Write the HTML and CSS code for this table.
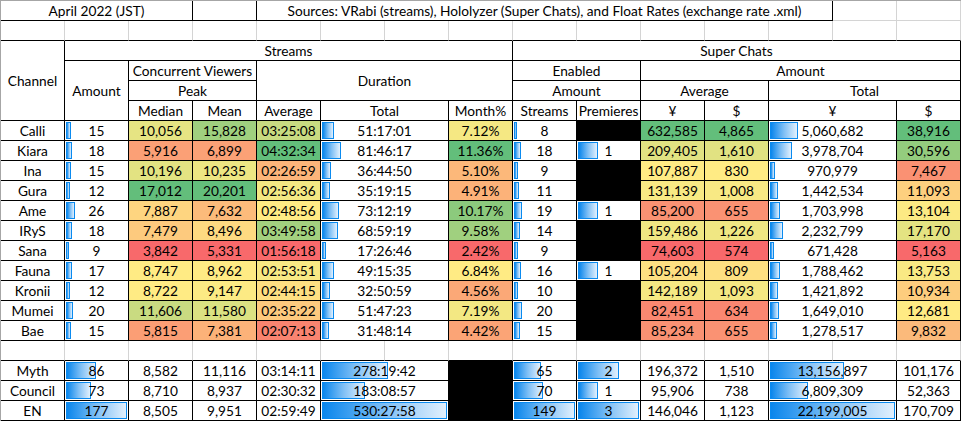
FILE: index.html
```html
<!DOCTYPE html>
<html>
<head>
<meta charset="utf-8">
<link rel="stylesheet" href="styles.css">
</head>
<body>
<div class="sheet">
  <!-- row 1 -->
  <div class="c s3">April 2022 (JST)</div>
  <div class="c"></div>
  <div class="c s9">Sources: VRabi (streams), Hololyzer (Super Chats), and Float Rates (exchange rate .xml)</div>
  <div class="c g"></div>
  <div class="c g"></div>
  <!-- row 2 -->
  <div class="c gb"></div><div class="c gb"></div><div class="c gb"></div><div class="c gb"></div><div class="c gb"></div>
  <div class="c gb"></div><div class="c gb"></div><div class="c gb"></div><div class="c gb"></div><div class="c gb"></div>
  <div class="c gb"></div><div class="c gb"></div><div class="c gb"></div><div class="c gb"></div><div class="c gb"></div>
  <!-- row 3 -->
  <div class="c r4">Channel</div>
  <div class="c s7">Streams</div>
  <div class="c s7">Super Chats</div>
  <!-- row 4 -->
  <div class="c r3">Amount</div>
  <div class="c s2">Concurrent Viewers</div>
  <div class="c s4 r2">Duration</div>
  <div class="c s2">Enabled</div>
  <div class="c s5">Amount</div>
  <!-- row 5 -->
  <div class="c s2">Peak</div>
  <div class="c s2">Amount</div>
  <div class="c s2">Average</div>
  <div class="c s3">Total</div>
  <!-- row 6 -->
  <div class="c">Median</div>
  <div class="c">Mean</div>
  <div class="c">Average</div>
  <div class="c s2">Total</div>
  <div class="c">Month%</div>
  <div class="c">Streams</div>
  <div class="c">Premieres</div>
  <div class="c">¥</div>
  <div class="c">$</div>
  <div class="c s2">¥</div>
  <div class="c">$</div>

  <!-- Calli -->
  <div class="c">Calli</div>
  <div class="c"><span class="bar" style="width:5px"></span><span class="v">15</span></div>
  <div class="c" style="background:rgb(230,228,131)">10,056</div>
  <div class="c" style="background:rgb(160,208,127)">15,828</div>
  <div class="c" style="background:rgb(200,219,129)">03:25:08</div>
  <div class="c s2"><span class="bar" style="width:12px"></span><span class="v">51:17:01</span></div>
  <div class="c" style="background:rgb(245,232,131)">7.12%</div>
  <div class="c"><span class="bar" style="width:3px"></span><span class="v">8</span></div>
  <div class="c k"></div>
  <div class="c" style="background:rgb(99,190,123)">632,585</div>
  <div class="c" style="background:rgb(99,190,123)">4,865</div>
  <div class="c s2"><span class="bar" style="width:28px"></span><span class="v">5,060,682</span></div>
  <div class="c" style="background:rgb(99,190,123)">38,916</div>

  <!-- Kiara -->
  <div class="c">Kiara</div>
  <div class="c"><span class="bar" style="width:6px"></span><span class="v">18</span></div>
  <div class="c" style="background:rgb(251,160,118)">5,916</div>
  <div class="c" style="background:rgb(251,161,118)">6,899</div>
  <div class="c" style="background:rgb(99,190,123)">04:32:34</div>
  <div class="c s2"><span class="bar" style="width:19px"></span><span class="v">81:46:17</span></div>
  <div class="c" style="background:rgb(99,190,123)">11.36%</div>
  <div class="c"><span class="bar" style="width:7px"></span><span class="v">18</span></div>
  <div class="c"><span class="bar" style="width:20px"></span><span class="v">1</span></div>
  <div class="c" style="background:rgb(225,226,130)">209,405</div>
  <div class="c" style="background:rgb(225,226,130)">1,610</div>
  <div class="c s2"><span class="bar" style="width:22px"></span><span class="v">3,978,704</span></div>
  <div class="c" style="background:rgb(148,204,126)">30,596</div>

  <!-- Ina -->
  <div class="c">Ina</div>
  <div class="c"><span class="bar" style="width:5px"></span><span class="v">15</span></div>
  <div class="c" style="background:rgb(227,227,130)">10,196</div>
  <div class="c" style="background:rgb(237,230,131)">10,235</div>
  <div class="c" style="background:rgb(252,181,122)">02:26:59</div>
  <div class="c s2"><span class="bar" style="width:9px"></span><span class="v">36:44:50</span></div>
  <div class="c" style="background:rgb(252,184,122)">5.10%</div>
  <div class="c"><span class="bar" style="width:4px"></span><span class="v">9</span></div>
  <div class="c k"></div>
  <div class="c" style="background:rgb(255,235,132)">107,887</div>
  <div class="c" style="background:rgb(255,235,132)">830</div>
  <div class="c s2"><span class="bar" style="width:5px"></span><span class="v">970,979</span></div>
  <div class="c" style="background:rgb(250,145,115)">7,467</div>

  <!-- Gura -->
  <div class="c">Gura</div>
  <div class="c"><span class="bar" style="width:4px"></span><span class="v">12</span></div>
  <div class="c" style="background:rgb(99,190,123)">17,012</div>
  <div class="c" style="background:rgb(99,190,123)">20,201</div>
  <div class="c" style="background:rgb(243,232,131)">02:56:36</div>
  <div class="c s2"><span class="bar" style="width:8px"></span><span class="v">35:19:15</span></div>
  <div class="c" style="background:rgb(252,178,121)">4.91%</div>
  <div class="c"><span class="bar" style="width:5px"></span><span class="v">11</span></div>
  <div class="c k"></div>
  <div class="c" style="background:rgb(248,233,132)">131,139</div>
  <div class="c" style="background:rgb(248,233,132)">1,008</div>
  <div class="c s2"><span class="bar" style="width:8px"></span><span class="v">1,442,534</span></div>
  <div class="c" style="background:rgb(253,208,127)">11,093</div>

  <!-- Ame -->
  <div class="c">Ame</div>
  <div class="c"><span class="bar" style="width:9px"></span><span class="v">26</span></div>
  <div class="c" style="background:rgb(254,213,128)">7,887</div>
  <div class="c" style="background:rgb(252,187,123)">7,632</div>
  <div class="c" style="background:rgb(255,235,132)">02:48:56</div>
  <div class="c s2"><span class="bar" style="width:17px"></span><span class="v">73:12:19</span></div>
  <div class="c" style="background:rgb(140,202,125)">10.17%</div>
  <div class="c"><span class="bar" style="width:8px"></span><span class="v">19</span></div>
  <div class="c"><span class="bar" style="width:20px"></span><span class="v">1</span></div>
  <div class="c" style="background:rgb(250,146,115)">85,200</div>
  <div class="c" style="background:rgb(250,146,115)">655</div>
  <div class="c s2"><span class="bar" style="width:10px"></span><span class="v">1,703,998</span></div>
  <div class="c" style="background:rgb(252,234,132)">13,104</div>

  <!-- IRyS -->
  <div class="c">IRyS</div>
  <div class="c"><span class="bar" style="width:6px"></span><span class="v">18</span></div>
  <div class="c" style="background:rgb(253,202,126)">7,479</div>
  <div class="c" style="background:rgb(254,218,129)">8,496</div>
  <div class="c" style="background:rgb(163,209,127)">03:49:58</div>
  <div class="c s2"><span class="bar" style="width:16px"></span><span class="v">68:59:19</span></div>
  <div class="c" style="background:rgb(160,208,127)">9.58%</div>
  <div class="c"><span class="bar" style="width:6px"></span><span class="v">14</span></div>
  <div class="c k"></div>
  <div class="c" style="background:rgb(240,231,131)">159,486</div>
  <div class="c" style="background:rgb(240,231,131)">1,226</div>
  <div class="c s2"><span class="bar" style="width:13px"></span><span class="v">2,232,799</span></div>
  <div class="c" style="background:rgb(228,227,130)">17,170</div>

  <!-- Sana -->
  <div class="c">Sana</div>
  <div class="c"><span class="bar" style="width:3px"></span><span class="v">9</span></div>
  <div class="c" style="background:rgb(248,105,107)">3,842</div>
  <div class="c" style="background:rgb(248,105,107)">5,331</div>
  <div class="c" style="background:rgb(248,105,107)">01:56:18</div>
  <div class="c s2"><span class="bar" style="width:4px"></span><span class="v">17:26:46</span></div>
  <div class="c" style="background:rgb(248,105,107)">2.42%</div>
  <div class="c"><span class="bar" style="width:4px"></span><span class="v">9</span></div>
  <div class="c k"></div>
  <div class="c" style="background:rgb(248,105,107)">74,603</div>
  <div class="c" style="background:rgb(248,105,107)">574</div>
  <div class="c s2"><span class="bar" style="width:4px"></span><span class="v">671,428</span></div>
  <div class="c" style="background:rgb(248,105,107)">5,163</div>

  <!-- Fauna -->
  <div class="c">Fauna</div>
  <div class="c"><span class="bar" style="width:6px"></span><span class="v">17</span></div>
  <div class="c" style="background:rgb(255,235,132)">8,747</div>
  <div class="c" style="background:rgb(255,235,132)">8,962</div>
  <div class="c" style="background:rgb(248,233,132)">02:53:51</div>
  <div class="c s2"><span class="bar" style="width:12px"></span><span class="v">49:15:35</span></div>
  <div class="c" style="background:rgb(255,235,132)">6.84%</div>
  <div class="c"><span class="bar" style="width:7px"></span><span class="v">16</span></div>
  <div class="c"><span class="bar" style="width:20px"></span><span class="v">1</span></div>
  <div class="c" style="background:rgb(254,224,130)">105,204</div>
  <div class="c" style="background:rgb(254,224,130)">809</div>
  <div class="c s2"><span class="bar" style="width:10px"></span><span class="v">1,788,462</span></div>
  <div class="c" style="background:rgb(249,233,132)">13,753</div>

  <!-- Kronii -->
  <div class="c">Kronii</div>
  <div class="c"><span class="bar" style="width:4px"></span><span class="v">12</span></div>
  <div class="c" style="background:rgb(255,235,132)">8,722</div>
  <div class="c" style="background:rgb(252,234,132)">9,147</div>
  <div class="c" style="background:rgb(254,223,130)">02:44:15</div>
  <div class="c s2"><span class="bar" style="width:8px"></span><span class="v">32:50:59</span></div>
  <div class="c" style="background:rgb(251,168,119)">4.56%</div>
  <div class="c"><span class="bar" style="width:4px"></span><span class="v">10</span></div>
  <div class="c k"></div>
  <div class="c" style="background:rgb(245,232,131)">142,189</div>
  <div class="c" style="background:rgb(245,232,131)">1,093</div>
  <div class="c s2"><span class="bar" style="width:8px"></span><span class="v">1,421,892</span></div>
  <div class="c" style="background:rgb(253,205,126)">10,934</div>

  <!-- Mumei -->
  <div class="c">Mumei</div>
  <div class="c"><span class="bar" style="width:7px"></span><span class="v">20</span></div>
  <div class="c" style="background:rgb(201,219,129)">11,606</div>
  <div class="c" style="background:rgb(219,225,130)">11,580</div>
  <div class="c" style="background:rgb(253,201,126)">02:35:22</div>
  <div class="c s2"><span class="bar" style="width:12px"></span><span class="v">51:47:23</span></div>
  <div class="c" style="background:rgb(243,232,131)">7.19%</div>
  <div class="c"><span class="bar" style="width:8px"></span><span class="v">20</span></div>
  <div class="c k"></div>
  <div class="c" style="background:rgb(250,136,113)">82,451</div>
  <div class="c" style="background:rgb(250,135,113)">634</div>
  <div class="c s2"><span class="bar" style="width:9px"></span><span class="v">1,649,010</span></div>
  <div class="c" style="background:rgb(255,235,132)">12,681</div>

  <!-- Bae -->
  <div class="c">Bae</div>
  <div class="c"><span class="bar" style="width:5px"></span><span class="v">15</span></div>
  <div class="c" style="background:rgb(251,158,117)">5,815</div>
  <div class="c" style="background:rgb(252,178,121)">7,381</div>
  <div class="c" style="background:rgb(249,132,112)">02:07:13</div>
  <div class="c s2"><span class="bar" style="width:7px"></span><span class="v">31:48:14</span></div>
  <div class="c" style="background:rgb(251,164,118)">4.42%</div>
  <div class="c"><span class="bar" style="width:6px"></span><span class="v">15</span></div>
  <div class="c k"></div>
  <div class="c" style="background:rgb(250,146,115)">85,234</div>
  <div class="c" style="background:rgb(250,146,115)">655</div>
  <div class="c s2"><span class="bar" style="width:7px"></span><span class="v">1,278,517</span></div>
  <div class="c" style="background:rgb(251,186,123)">9,832</div>

  <!-- blank row -->
  <div class="c gb"></div><div class="c gb"></div><div class="c gb"></div><div class="c gb"></div><div class="c gb"></div>
  <div class="c gb"></div><div class="c gb"></div><div class="c gb"></div><div class="c gb"></div><div class="c gb"></div>
  <div class="c gb"></div><div class="c gb"></div><div class="c gb"></div><div class="c gb"></div><div class="c gb"></div>

  <!-- Myth -->
  <div class="c">Myth</div>
  <div class="c"><span class="bar" style="width:30px"></span><span class="v">86</span></div>
  <div class="c">8,582</div>
  <div class="c">11,116</div>
  <div class="c">03:14:11</div>
  <div class="c s2"><span class="bar" style="width:66px"></span><span class="v">278:19:42</span></div>
  <div class="c k"></div>
  <div class="c"><span class="bar" style="width:27px"></span><span class="v">65</span></div>
  <div class="c"><span class="bar" style="width:41px"></span><span class="v">2</span></div>
  <div class="c">196,372</div>
  <div class="c">1,510</div>
  <div class="c s2"><span class="bar" style="width:74px"></span><span class="v">13,156,897</span></div>
  <div class="c">101,176</div>

  <!-- Council -->
  <div class="c">Council</div>
  <div class="c"><span class="bar" style="width:25px"></span><span class="v">73</span></div>
  <div class="c">8,710</div>
  <div class="c">8,937</div>
  <div class="c">02:30:32</div>
  <div class="c s2"><span class="bar" style="width:43px"></span><span class="v">183:08:57</span></div>
  <div class="c k"></div>
  <div class="c"><span class="bar" style="width:29px"></span><span class="v">70</span></div>
  <div class="c"><span class="bar" style="width:20px"></span><span class="v">1</span></div>
  <div class="c">95,906</div>
  <div class="c">738</div>
  <div class="c s2"><span class="bar" style="width:38px"></span><span class="v">6,809,309</span></div>
  <div class="c">52,363</div>

  <!-- EN -->
  <div class="c">EN</div>
  <div class="c"><span class="bar" style="width:61px"></span><span class="v">177</span></div>
  <div class="c">8,505</div>
  <div class="c">9,951</div>
  <div class="c">02:59:49</div>
  <div class="c s2"><span class="bar" style="width:125px"></span><span class="v">530:27:58</span></div>
  <div class="c k"></div>
  <div class="c"><span class="bar" style="width:61px"></span><span class="v">149</span></div>
  <div class="c"><span class="bar" style="width:61px"></span><span class="v">3</span></div>
  <div class="c">146,046</div>
  <div class="c">1,123</div>
  <div class="c s2"><span class="bar" style="width:125px"></span><span class="v">22,199,005</span></div>
  <div class="c">170,709</div>
</div>
</body>
</html>
```
FILE: styles.css
```css
html, body {
  margin: 0;
  padding: 0;
  background: #ffffff;
}

body {
  font-family: Lato, "Liberation Sans", sans-serif;
  font-size: 13.7px;
  color: #000000;
}

.sheet {
  display: grid;
  grid-template-columns: repeat(15, 64px);
  grid-auto-rows: 20px;
  width: max-content;
  border-left: 1px solid #a6a6a6;
  border-top: 1px solid #a6a6a6;
}

.c {
  box-sizing: border-box;
  position: relative;
  display: flex;
  align-items: center;
  justify-content: center;
  border-right: 1px solid #000000;
  border-bottom: 1px solid #000000;
  line-height: 19px;
  white-space: nowrap;
  min-width: 0;
}

.g {
  border-right-color: #d4d4d4;
  border-bottom-color: #d4d4d4;
}

.gb {
  border-right-color: #d4d4d4;
}

.k {
  background: #000000;
}

.s2 { grid-column: span 2; }
.s3 { grid-column: span 3; }
.s4 { grid-column: span 4; }
.s5 { grid-column: span 5; }
.s7 { grid-column: span 7; }
.s9 { grid-column: span 9; }
.r2 { grid-row: span 2; }
.r3 { grid-row: span 3; }
.r4 { grid-row: span 4; }

.bar {
  position: absolute;
  left: 1px;
  top: 1px;
  height: 17px;
  box-sizing: border-box;
  border: 1px solid #0a8aef;
  background: linear-gradient(to right, #0a86ec 0%, #7fbff5 50%, #e2f0fd 100%);
}

.v {
  position: relative;
}
```
